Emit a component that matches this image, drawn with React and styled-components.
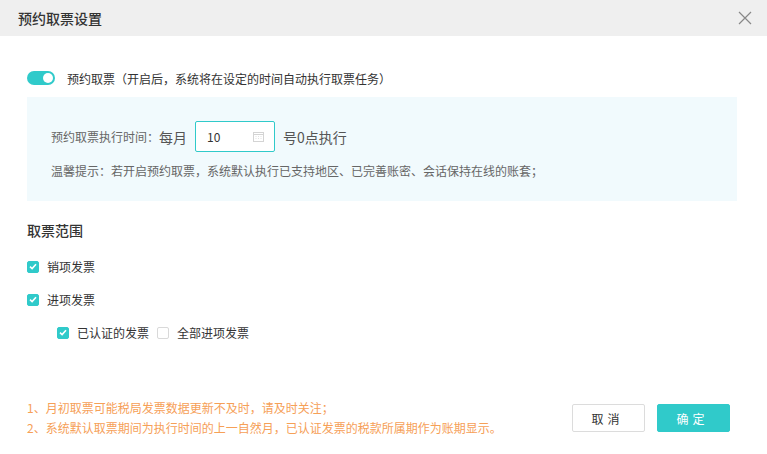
import React from 'react';
import styled, { createGlobalStyle } from 'styled-components';

const GlobalStyle = createGlobalStyle`
  html, body {
    margin: 0;
    padding: 0;
    background: #ffffff;
    font-family: "Noto Sans CJK SC", "Noto Sans", sans-serif;
    color: #333;
  }
`;

const TEAL = '#30caca';

const Dialog = styled.div`
  width: 767px;
  height: 454px;
  display: flex;
  flex-direction: column;
  background: #fff;
`;

// Шапка
const Header = styled.div`
  height: 36px;
  background: #efefef;
  display: flex;
  align-items: center;
  justify-content: space-between;
  padding: 0 14px 0 18px;
`;

const Title = styled.div`
  font-size: 14px;
  font-weight: 500;
  color: #333;
`;

const Close = styled.button`
  border: none;
  background: transparent;
  padding: 0;
  width: 16px;
  height: 16px;
  display: flex;
  align-items: center;
  justify-content: center;
  cursor: pointer;
`;

const Body = styled.div`
  flex: 1;
  padding: 35px 30px 0 27px;
  display: flex;
  flex-direction: column;
`;

const ToggleRow = styled.div`
  display: flex;
  align-items: center;
  gap: 12px;
  font-size: 12px;
  color: #333;
  height: 14px;
`;

const Switch = styled.span`
  width: 28px;
  height: 14px;
  border-radius: 7px;
  background: ${TEAL};
  position: relative;
  flex-shrink: 0;

  &::after {
    content: '';
    position: absolute;
    top: 2px;
    right: 2px;
    width: 10px;
    height: 10px;
    border-radius: 50%;
    background: #fff;
  }
`;

const InfoBox = styled.div`
  margin-top: 12px;
  background: #f1fafd;
  padding: 24px 24px 22px;
  display: flex;
  flex-direction: column;
  gap: 11px;
`;

const TimeRow = styled.div`
  display: flex;
  align-items: center;
  height: 31px;
`;

const Label = styled.span`
  font-size: ${p => (p.$big ? '14px' : '12px')};
  color: ${p => (p.$big ? '#555' : '#666')};
`;

const Input = styled.div`
  width: 80px;
  height: 31px;
  box-sizing: border-box;
  border: 1px solid ${TEAL};
  border-radius: 2px;
  background: #fff;
  margin: 0 8px 0 8px;
  display: flex;
  align-items: center;
  justify-content: space-between;
  padding: 0 10px 0 11px;
  font-size: 12px;
  color: #333;
`;

const Tip = styled.div`
  font-size: 12px;
  color: #666;
  line-height: 16px;
`;

const SectionTitle = styled.div`
  margin-top: 19px;
  font-size: 14px;
  font-weight: 500;
  color: #333;
  line-height: 20px;
`;

const CheckList = styled.div`
  margin-top: 18px;
  display: flex;
  flex-direction: column;
  gap: 16px;
`;

const CheckRow = styled.div`
  display: flex;
  align-items: center;
  padding-left: ${p => p.$indent || 0}px;
  height: 17px;
`;

const CheckItem = styled.label`
  display: flex;
  align-items: center;
  gap: 8px;
  font-size: 12px;
  color: #333;
  margin-right: 8px;
`;

const Box = styled.span`
  width: 12px;
  height: 12px;
  box-sizing: border-box;
  border-radius: 2px;
  background: ${p => (p.$checked ? TEAL : '#fff')};
  border: 1px solid ${p => (p.$checked ? TEAL : '#d9d9d9')};
  display: flex;
  align-items: center;
  justify-content: center;
`;

const Footer = styled.div`
  display: flex;
  align-items: center;
  justify-content: space-between;
  padding: 0 37px 16px 27px;
`;

const Notes = styled.div`
  font-size: 12px;
  color: #f6a057;
  line-height: 20px;
`;

const Buttons = styled.div`
  display: flex;
  gap: 12px;
`;

const Button = styled.button`
  width: 73px;
  height: 28px;
  border-radius: 2px;
  font-family: inherit;
  font-size: 12px;
  letter-spacing: 4px;
  padding-left: 4px;
  cursor: pointer;
  border: 1px solid ${p => (p.$primary ? TEAL : '#dcdcdc')};
  background: ${p => (p.$primary ? TEAL : '#fff')};
  color: ${p => (p.$primary ? '#fff' : '#333')};
`;

const Check = () => (
  <svg width="8" height="7" viewBox="0 0 8 7">
    <path d="M1 3.6 L3.1 5.5 L7 1.2" fill="none" stroke="#fff" strokeWidth="1.6" />
  </svg>
);

const Calendar = () => (
  <svg width="11" height="11" viewBox="0 0 11 11">
    <rect x="0.5" y="1.5" width="10" height="9" fill="none" stroke="#d4d4d4" />
    <line x1="0.5" y1="3.5" x2="10.5" y2="3.5" stroke="#d4d4d4" />
    <path d="M2.5 5.5h1M5 5.5h1M7.5 5.5h1M2.5 7.5h1M5 7.5h1M7.5 7.5h1" stroke="#e2e2e2" />
  </svg>
);

const Checkbox = ({ checked, children }) => (
  <CheckItem>
    <Box $checked={checked}>{checked && <Check />}</Box>
    {children}
  </CheckItem>
);

const App = () => {
  return (
    <Dialog>
      <GlobalStyle />
      <Header>
        <Title>预约取票设置</Title>
        <Close>
          <svg width="14" height="14" viewBox="0 0 14 14">
            <path d="M1 1 L13 13 M13 1 L1 13" stroke="#888" strokeWidth="1.2" />
          </svg>
        </Close>
      </Header>
      <Body>
        <ToggleRow>
          <Switch />
          预约取票（开启后，系统将在设定的时间自动执行取票任务）
        </ToggleRow>
        <InfoBox>
          <TimeRow>
            <Label>预约取票执行时间：</Label>
            <Label $big>每月</Label>
            <Input>
              <span>10</span>
              <Calendar />
            </Input>
            <Label $big>号0点执行</Label>
          </TimeRow>
          <Tip>温馨提示：若开启预约取票，系统默认执行已支持地区、已完善账密、会话保持在线的账套；</Tip>
        </InfoBox>
        <SectionTitle>取票范围</SectionTitle>
        <CheckList>
          <CheckRow>
            <Checkbox checked>销项发票</Checkbox>
          </CheckRow>
          <CheckRow>
            <Checkbox checked>进项发票</Checkbox>
          </CheckRow>
          <CheckRow $indent={30}>
            <Checkbox checked>已认证的发票</Checkbox>
            <Checkbox>全部进项发票</Checkbox>
          </CheckRow>
        </CheckList>
      </Body>
      <Footer>
        <Notes>
          <div>1、月初取票可能税局发票数据更新不及时，请及时关注；</div>
          <div>2、系统默认取票期间为执行时间的上一自然月，已认证发票的税款所属期作为账期显示。</div>
        </Notes>
        <Buttons>
          <Button>取消</Button>
          <Button $primary>确定</Button>
        </Buttons>
      </Footer>
    </Dialog>
  );
};

export default App;
